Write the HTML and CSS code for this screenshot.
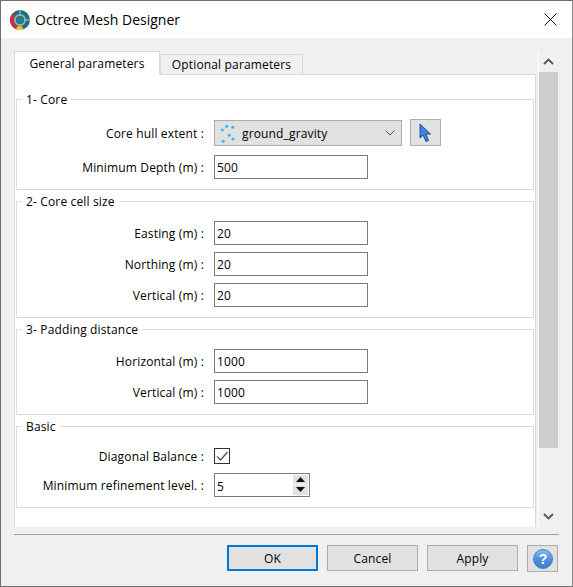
FILE: index.html
```html
<!DOCTYPE html>
<html lang="en">
<head>
    <meta charset="UTF-8">
    <title>Octree Mesh Designer</title>
    <link rel="stylesheet" href="styles.css">
</head>
<body>

<div class="window">
    <div class="titlebar">
        <svg class="app-icon" width="20" height="20" viewBox="0 0 20 20">
            <circle cx="10" cy="10" r="10" fill="#1d6f7c"/>
            <path d="M2.5 3.4A10 10 0 0 0 7 19.5L8.5 15.5A6 6 0 0 1 5 6.5Z" fill="#d22a40"/>
            <path d="M6 19A10 10 0 0 0 13.5 19.4L11.5 16A6 6 0 0 1 8 15.7Z" fill="#f2c230"/>
            <circle cx="10" cy="10" r="5" fill="none" stroke="#7fb8b4" stroke-width="2"/>
            <path d="M10 0V5M15 10H20" stroke="#7fb8b4" stroke-width="1.5"/>
            <circle cx="10" cy="10" r="3" fill="#2d7c88"/>
        </svg>
        <span class="title">Octree Mesh Designer</span>
        <svg class="close" width="13" height="13" viewBox="0 0 13 13">
            <path d="M0.5 0.5L12.5 12.5M12.5 0.5L0.5 12.5" stroke="#111" stroke-width="1"/>
        </svg>
    </div>

    <div class="content">
        <div class="main">
            <div class="tab-area">
                <div class="tabs">
                    <div class="tab active">General parameters</div>
                    <div class="tab">Optional parameters</div>
                </div>
                <div class="pane">
                    <fieldset class="group group-core">
                        <legend>1- Core</legend>
                        <div class="row">
                            <label>Core hull extent :</label>
                            <div class="combo">
                                <svg width="16" height="20" viewBox="0 0 16 20">
                                    <g fill="#35b5ff">
                                        <circle cx="6.7" cy="3.3" r="1.5"/><circle cx="12.7" cy="4.3" r="1.5"/>
                                        <circle cx="2.3" cy="7" r="1.5"/><circle cx="9.3" cy="12.3" r="1.5"/>
                                        <circle cx="13" cy="16" r="1.5"/><circle cx="3.3" cy="18.3" r="1.5"/>
                                    </g>
                                </svg>
                                <span class="combo-text">ground_gravity</span>
                                <svg class="chevron" width="10" height="6" viewBox="0 0 10 6">
                                    <path d="M0.5 0.5L5 5L9.5 0.5" fill="none" stroke="#555"/>
                                </svg>
                            </div>
                            <button class="pick" type="button">
                                <svg width="13" height="20" viewBox="0 0 13 20">
                                    <path d="M1 1V15L4 12L7 18.5L9.5 17.5L7 11H11.5Z" fill="#3d82ea" stroke="#2a4a8a"/>
                                </svg>
                            </button>
                        </div>
                        <div class="row">
                            <label>Minimum Depth (m) :</label>
                            <input class="field" type="text" value="500">
                        </div>
                    </fieldset>

                    <fieldset class="group group-size">
                        <legend>2- Core cell size</legend>
                        <div class="row">
                            <label>Easting (m) :</label>
                            <input class="field" type="text" value="20">
                        </div>
                        <div class="row">
                            <label>Northing (m) :</label>
                            <input class="field" type="text" value="20">
                        </div>
                        <div class="row">
                            <label>Vertical (m) :</label>
                            <input class="field" type="text" value="20">
                        </div>
                    </fieldset>

                    <fieldset class="group group-padding">
                        <legend>3- Padding distance</legend>
                        <div class="row">
                            <label>Horizontal (m) :</label>
                            <input class="field" type="text" value="1000">
                        </div>
                        <div class="row">
                            <label>Vertical (m) :</label>
                            <input class="field" type="text" value="1000">
                        </div>
                    </fieldset>

                    <fieldset class="group group-basic">
                        <legend>Basic</legend>
                        <div class="row row-check">
                            <label>Diagonal Balance :</label>
                            <div class="check">
                                <svg width="14" height="14" viewBox="0 0 14 14">
                                    <path d="M2 7.5L5.5 11L12.5 3" fill="none" stroke="#555" stroke-width="1.3"/>
                                </svg>
                            </div>
                        </div>
                        <div class="row">
                            <label>Minimum refinement level. :</label>
                            <div class="spin">
                                <span class="spin-value">5</span>
                                <div class="spin-btns">
                                    <div class="spin-btn"><svg width="9" height="5" viewBox="0 0 9 5"><path d="M4.5 0L9 5H0Z" fill="#111"/></svg></div>
                                    <div class="spin-btn"><svg width="9" height="5" viewBox="0 0 9 5"><path d="M0 0H9L4.5 5Z" fill="#111"/></svg></div>
                                </div>
                            </div>
                        </div>
                    </fieldset>
                </div>
            </div>

            <div class="scrollbar">
                <svg class="arrow arrow-up" width="11" height="7" viewBox="0 0 11 7">
                    <path d="M1 6L5.5 1.5L10 6" fill="none" stroke="#555" stroke-width="1.8"/>
                </svg>
                <div class="thumb"></div>
                <svg class="arrow arrow-down" width="11" height="7" viewBox="0 0 11 7">
                    <path d="M1 1L5.5 5.5L10 1" fill="none" stroke="#555" stroke-width="1.8"/>
                </svg>
            </div>
        </div>

        <div class="footer">
            <button class="btn btn-default" type="button">OK</button>
            <button class="btn" type="button">Cancel</button>
            <button class="btn" type="button">Apply</button>
            <button class="btn-help" type="button">
                <svg width="20" height="20" viewBox="0 0 20 20">
                    <defs>
                        <linearGradient id="helpFill" x1="0" y1="0" x2="0" y2="1">
                            <stop offset="0" stop-color="#8dbdf0"/>
                            <stop offset="0.5" stop-color="#4d92e0"/>
                            <stop offset="1" stop-color="#3a7ccc"/>
                        </linearGradient>
                    </defs>
                    <circle cx="10" cy="10" r="9.5" fill="url(#helpFill)" stroke="#3f7fc8"/>
                    <text x="10" y="15" text-anchor="middle" class="help-mark">?</text>
                </svg>
            </button>
        </div>
    </div>
</div>

</body>
</html>
```

FILE: styles.css
```css
html, body {
    margin: 0;
    padding: 0;
}
body {
    font-family: 'Open Sans', 'Noto Sans', sans-serif;
    font-size: 12px;
    letter-spacing: 0.15px;
    color: #000;
    background-color: #f0f0f0;
}
.window {
    box-sizing: border-box;
    width: 573px;
    height: 587px;
    border: 1px solid #6f6f6f;
    border-right-color: #8a8a8a;
    background-color: #f0f0f0;
    overflow: hidden;
}
.titlebar {
    display: flex;
    align-items: center;
    height: 37px;
    background-color: #fff;
    padding-left: 9px;
    padding-right: 15px;
}
.app-icon {
    margin-right: 5px;
}
.title {
    font-size: 14px;
    letter-spacing: 0;
    flex: 1;
}
.content {
    padding: 13px 14px 0 13px;
}
.main {
    display: flex;
    height: 476px;
}
.tab-area {
    width: 522px;
}
.tabs {
    display: flex;
    align-items: flex-end;
    height: 23px;
    position: relative;
    z-index: 1;
}
.tab {
    box-sizing: border-box;
    width: 143px;
    height: 20px;
    line-height: 19px;
    text-align: center;
    background-color: #f0f0f0;
    border: 1px solid #d9d9d9;
    border-bottom: none;
}
.tab.active {
    width: 146px;
    height: 24px;
    margin-bottom: -1px;
    line-height: 23px;
    background-color: #fff;
}
.pane {
    box-sizing: border-box;
    height: 453px;
    width: 522px;
    background-color: #fff;
    border: 1px solid #d9d9d9;
    border-bottom: none;
    padding: 16px 0 0 1px;
}
.group {
    box-sizing: border-box;
    margin: 0 0 3px 0;
    width: 518px;
    padding: 0;
    border: 1px solid #dcdcdc;
}
.group legend {
    margin-left: 5px;
    padding: 0 4px;
    line-height: 17px;
    height: 17px;
}
.group-core {
    height: 99px;
    padding-top: 12px;
}
.group-core .row {
    margin-bottom: 9px;
}
.group-size {
    height: 125px;
    padding-top: 10px;
}
.group-padding {
    height: 94px;
    padding-top: 10px;
}
.group-basic {
    height: 90px;
    padding-top: 8px;
}
.row {
    display: flex;
    align-items: center;
    height: 25px;
    margin-bottom: 6px;
}
.row label {
    width: 187px;
    padding-top: 2px;
    text-align: right;
    margin-right: 10px;
    white-space: nowrap;
}
.row-check {
    margin-bottom: 4px;
}
.field {
    box-sizing: border-box;
    width: 154px;
    height: 24px;
    border: 1px solid #7a7a7a;
    padding: 2px 2px 0;
    font: inherit;
    letter-spacing: inherit;
    color: #000;
    outline: none;
    border-radius: 0;
}
.combo {
    box-sizing: border-box;
    display: flex;
    align-items: center;
    width: 188px;
    height: 26px;
    margin-right: 8px;
    padding: 0 6px 0 5px;
    background-color: #e1e1e1;
    border: 1px solid #adadad;
}
.combo-text {
    flex: 1;
    margin-left: 6px;
    padding-top: 2px;
}
.pick {
    box-sizing: border-box;
    display: flex;
    align-items: center;
    justify-content: center;
    width: 31px;
    height: 27px;
    padding: 0;
    background-color: #e1e1e1;
    border: 1px solid #adadad;
}
.check {
    box-sizing: border-box;
    display: flex;
    align-items: center;
    justify-content: center;
    width: 16px;
    height: 16px;
    background-color: #fff;
    border: 1px solid #333;
}
.spin {
    box-sizing: border-box;
    display: flex;
    justify-content: space-between;
    width: 96px;
    height: 24px;
    padding: 1px;
    background-color: #fff;
    border: 1px solid #7a7a7a;
}
.spin-value {
    line-height: 23px;
    padding-left: 1px;
}
.spin-btns {
    display: flex;
    flex-direction: column;
    width: 15px;
    gap: 1px;
}
.spin-btn {
    display: flex;
    align-items: center;
    justify-content: center;
    flex: 1;
    background-color: #e1e1e1;
}
.scrollbar {
    display: flex;
    flex-direction: column;
    align-items: center;
    width: 19px;
    margin-left: 2px;
    border-left: 1px solid #fff;
    height: 476px;
}
.arrow {
    flex: none;
}
.arrow-up {
    margin: 7px 0 7px;
}
.arrow-down {
    margin-bottom: 7px;
}
.thumb {
    width: 19px;
    height: 376px;
    margin-bottom: auto;
    background-color: #cdcdcd;
}
.footer {
    display: flex;
    gap: 9px;
    margin-top: 7px;
    padding-top: 10px;
    border-top: 1px solid #a0a0a0;
    padding-left: 213px;
    width: 332px;
}
.btn {
    box-sizing: border-box;
    width: 91px;
    height: 26px;
    padding: 0;
    font: inherit;
    letter-spacing: inherit;
    color: #000;
    background-color: #e1e1e1;
    border: 1px solid #adadad;
}
.btn-default {
    border: 2px solid #0078d7;
}
.btn-help {
    box-sizing: border-box;
    display: flex;
    align-items: center;
    justify-content: center;
    width: 31px;
    height: 27px;
    padding: 0;
    background-color: #e1e1e1;
    border: 1px solid #adadad;
}
.help-mark {
    font-family: 'Liberation Sans', sans-serif;
    font-size: 14px;
    font-weight: bold;
    fill: #fff;
}
```
